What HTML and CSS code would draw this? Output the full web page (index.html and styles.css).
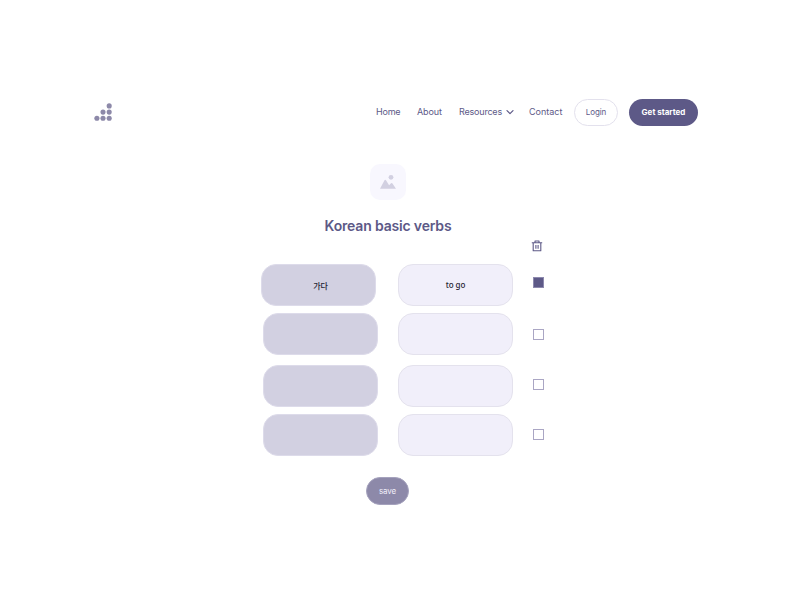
FILE: index.html
```html
<!DOCTYPE html>
<html lang="en">
<head>
<meta charset="utf-8">
<title>Korean basic verbs</title>
<link rel="stylesheet" href="styles.css">
</head>
<body>
<header class="header">
  <svg class="logo" width="18" height="18" viewBox="0 0 18 18">
    <circle cx="14.2" cy="2.9" r="2.55"/><circle cx="8" cy="9.1" r="2.55"/><circle cx="14.2" cy="9.1" r="2.55"/>
    <circle cx="1.9" cy="15.3" r="2.55"/><circle cx="8" cy="15.3" r="2.55"/><circle cx="14.2" cy="15.3" r="2.55"/>
  </svg>
  <nav class="nav">
    <a class="home">Home</a>
    <a class="about">About</a>
    <a class="resources"><span>Resources</span>
      <svg class="chevron" width="8" height="6" viewBox="0 0 8 6"><path d="M1 1.7 4 4.7 7 1.7"/></svg></a>
    <a class="contact">Contact</a>
  </nav>
  <button class="button login">Login</button>
  <button class="button start">Get started</button>
</header>
<main class="main">
  <div class="picture">
    <svg width="36" height="36" viewBox="0 0 36 36"><path d="M10 24.7 14.5 16.2Q15.2 15.1 16 16.2L19.1 21.2 21 19.3Q21.8 18.7 22.5 19.6L26 24.7Z"/><circle cx="21" cy="13.3" r="2.4"/></svg>
  </div>
  <h1 class="title">Korean basic verbs</h1>
  <div class="tools">
    <svg class="trash" width="12" height="12" viewBox="0 0 12 12"><path d="M.8 2.7H11.2M4 2.5V1H8V2.5M2.2 3V10.8H9.8V3M4.9 5V8.8M7.1 5V8.8"/></svg>
  </div>
  <section class="list">
    <div class="row first"><div class="card word"><span lang="ko">가다</span></div><div class="card meaning"><span>to go</span></div><span class="check"></span></div>
    <div class="row second"><div class="card word"></div><div class="card meaning"></div><span class="check"></span></div>
    <div class="row third"><div class="card word"></div><div class="card meaning"></div><span class="check"></span></div>
    <div class="row fourth"><div class="card word"></div><div class="card meaning"></div><span class="check"></span></div>
  </section>
  <button class="button save">save</button>
</main>
</body>
</html>
```
FILE: styles.css
```css
* { box-sizing: border-box; }
body { margin: 0; background: #fff; color: #5d5987; font-family: Inter, "Noto Sans CJK KR", sans-serif; }
.header { display: flex; align-items: center; height: 27px; margin: 99px 94px 0 95px; }
.logo { margin-bottom: 1px; fill: #8d89a9; overflow: visible; }
.nav { display: flex; align-items: center; margin: 0 0 1px 263px; font-size: 9px; line-height: 14px; white-space: nowrap; }
.home { width: 41px; letter-spacing: -.2px; }
.about { width: 42px; letter-spacing: -.1px; }
.resources { display: flex; align-items: center; width: 70px; letter-spacing: -.2px; }
.resources span { width: 47px; }
.chevron { fill: none; stroke: #5d5987; stroke-width: 1.2; stroke-linecap: round; stroke-linejoin: round; }
.contact { width: 45px; }
.button { display: flex; align-items: center; justify-content: center; flex: none; padding: 0 0 1px; border: 0; border-radius: 14px; font-family: inherit; white-space: nowrap; }
.login { width: 44px; height: 27px; border: 1px solid #e3e1ed; background: #fff; color: #5d5987; font-size: 8px; letter-spacing: -.1px; }
.start { width: 69px; height: 27px; margin-left: 11px; background: #5d5987; color: #fff; font-size: 8px; font-weight: 700; }
.main { display: flex; flex-direction: column; align-items: center; width: 776px; padding-top: 38px; }
.picture { width: 36px; height: 36px; border-radius: 10px; background: #f8f7fe; }
.picture svg { display: block; fill: #d2d0e1; }
.title { height: 20px; margin: 16px 0 0; font-size: 14px; line-height: 20px; font-weight: 600; letter-spacing: -.17px; }
.tools { display: flex; width: 245px; height: 12px; margin-top: 4px; align-self: flex-end; }
.trash { fill: none; stroke: #5d5987; stroke-width: 1.1; stroke-linejoin: round; }
.list { display: flex; flex-direction: column; width: 283px; margin: 12px 0 0 33px; }
.row { display: flex; height: 42px; }
.first { margin-left: -2px; }
.second { margin-top: 7px; }
.third { margin-top: 10px; }
.fourth { margin-top: 7px; }
.card { display: flex; align-items: center; justify-content: center; width: 115px; height: 42px; border-radius: 15px; color: #252431; }
.word { border: 1px solid #dddbea; background: #d2d0e1; padding-left: 4px; }
.word span { font-family: "Noto Sans CJK KR", sans-serif; font-size: 8px; font-weight: 500; line-height: 12px; padding-top: 2px; }
.meaning { margin-left: 20px; border: 1px solid #e4e2ed; background: #f1effa; }
.meaning span { font-family: "Noto Sans", sans-serif; font-size: 8px; font-weight: 500; line-height: 12px; letter-spacing: -.1px; }
.first .meaning { margin-left: 22px; }
.check { flex: none; width: 11px; height: 11px; margin: 16px 0 0 20px; border: 1px solid #aaa6c4; background: #fff; }
.first .check { margin-top: 13px; background: #5d5987; border-color: #8d89ae; }
.third .check { margin-top: 14px; }
.fourth .check { margin-top: 15px; }
.save { width: 43px; height: 28px; margin: 21px 1px 0 0; border: 1px solid #a5a2bd; background: #8d89a9; color: #f1effa; font-size: 8px; letter-spacing: -.1px; }
```
